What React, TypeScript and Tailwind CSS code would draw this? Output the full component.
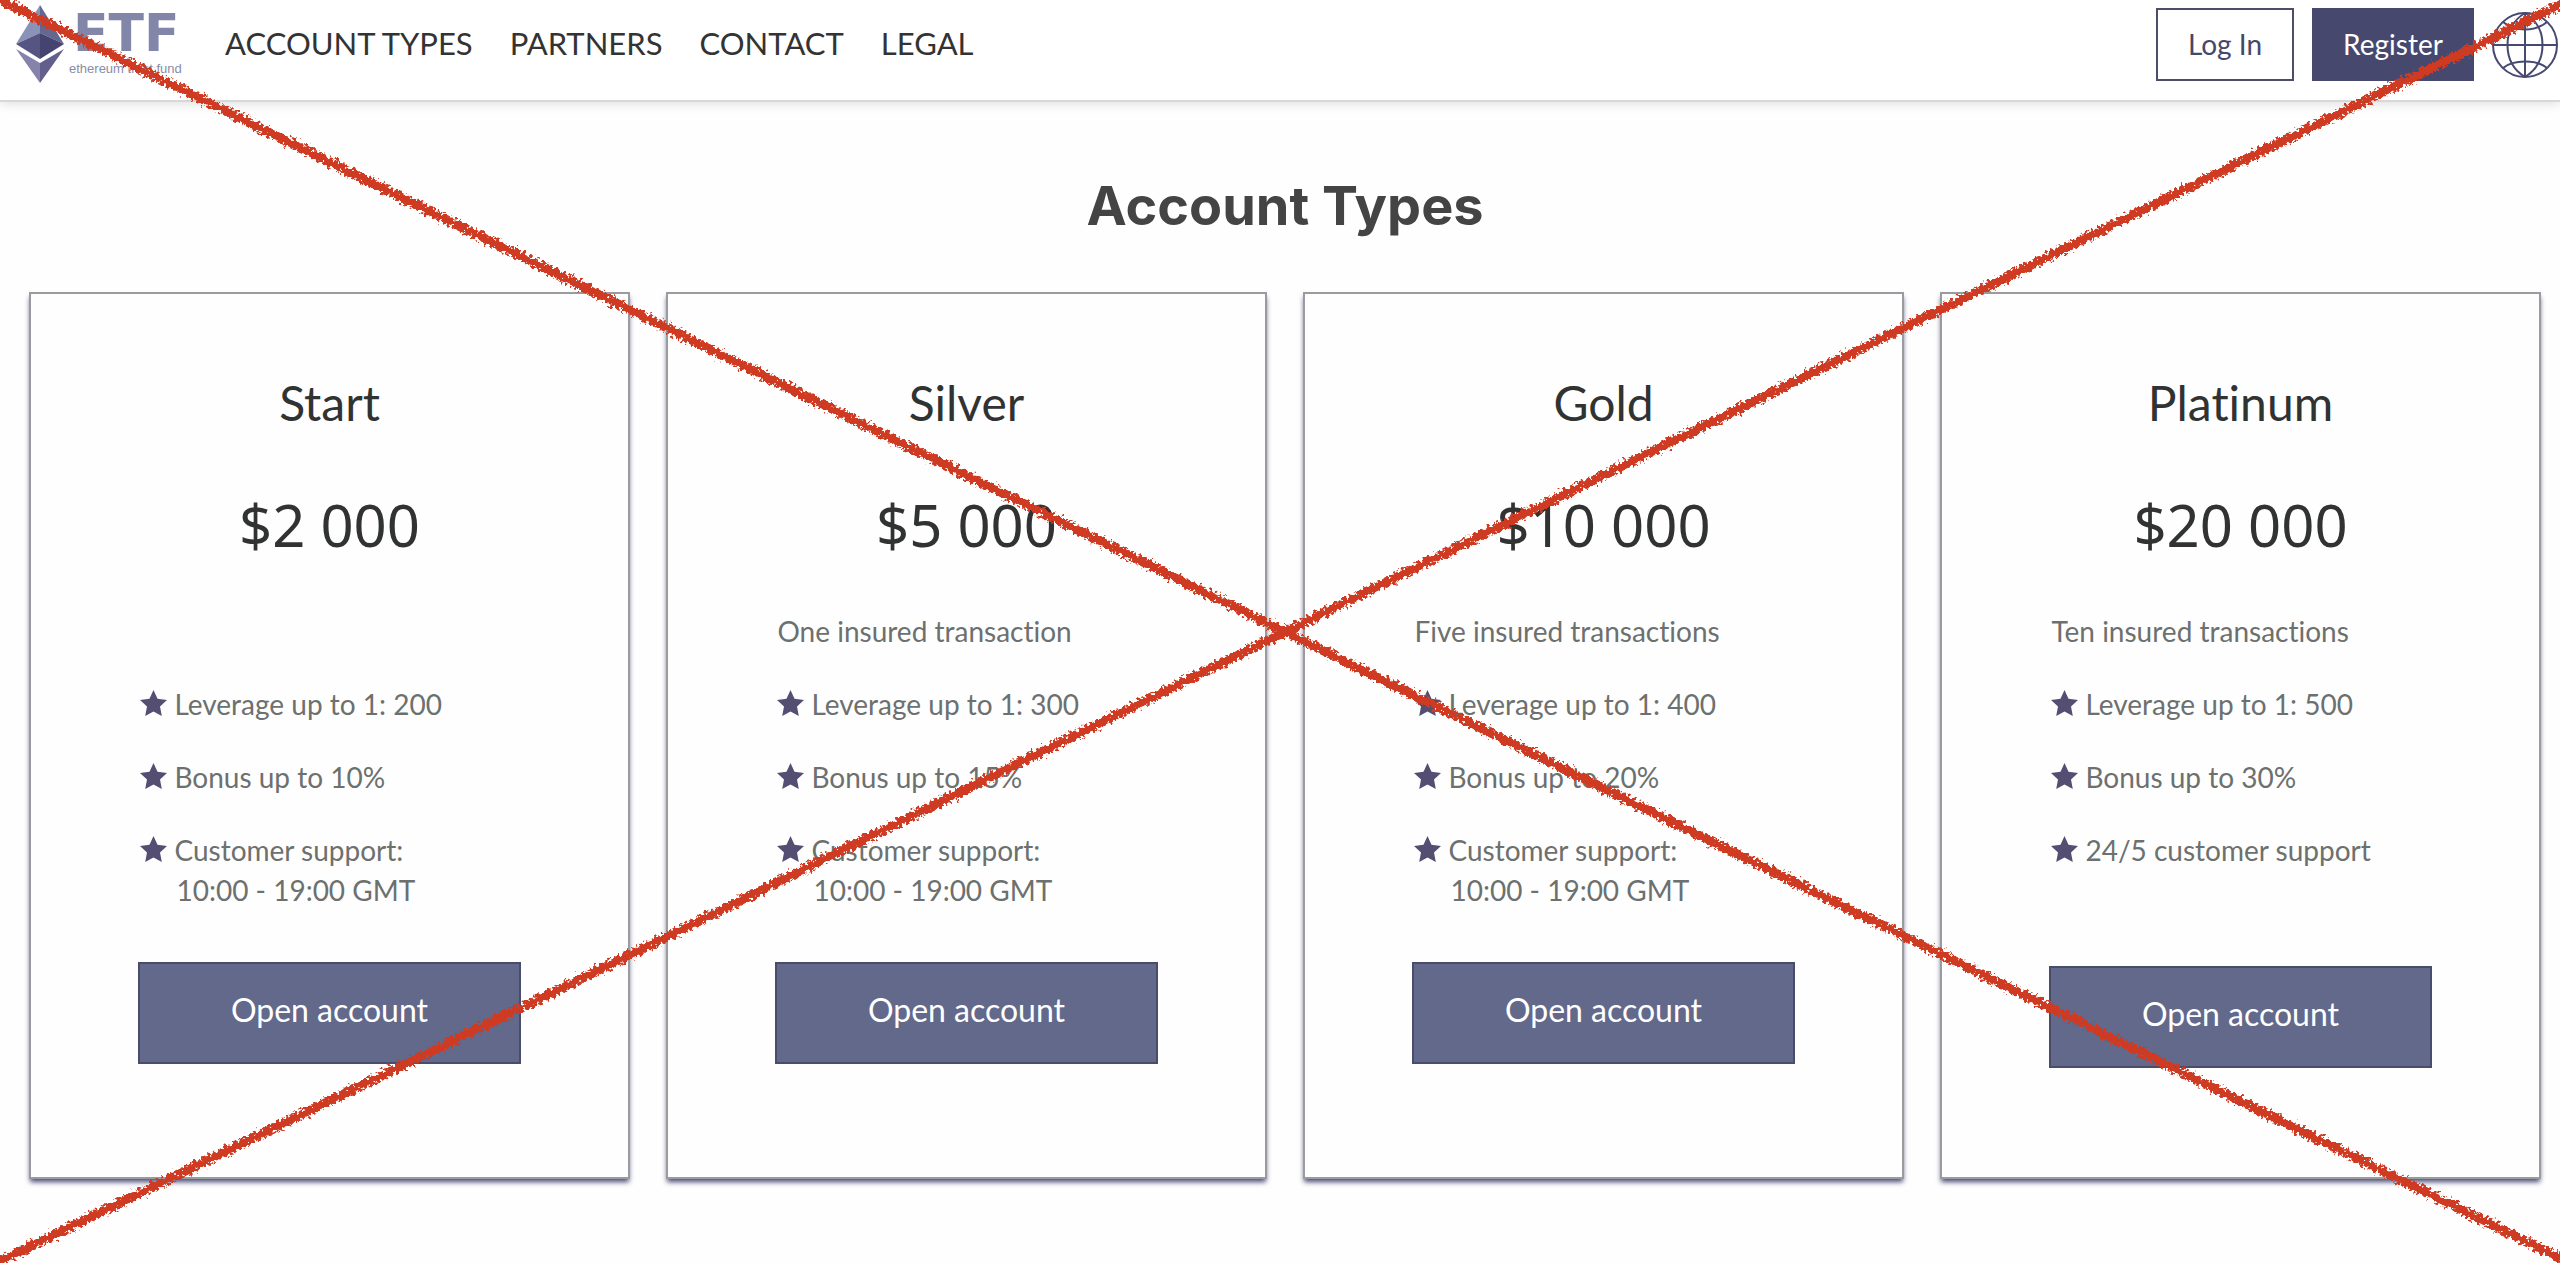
type Plan = {
  name: string;
  price: string;
  insured?: string;
  features: string[];
  hours?: string;
};

const plans: Plan[] = [
  {
    name: "Start",
    price: "$2 000",
    features: ["Leverage up to 1: 200", "Bonus up to 10%", "Customer support:"],
    hours: "10:00 - 19:00 GMT",
  },
  {
    name: "Silver",
    price: "$5 000",
    insured: "One insured transaction",
    features: ["Leverage up to 1: 300", "Bonus up to 15%", "Customer support:"],
    hours: "10:00 - 19:00 GMT",
  },
  {
    name: "Gold",
    price: "$10 000",
    insured: "Five insured transactions",
    features: ["Leverage up to 1: 400", "Bonus up to 20%", "Customer support:"],
    hours: "10:00 - 19:00 GMT",
  },
  {
    name: "Platinum",
    price: "$20 000",
    insured: "Ten insured transactions",
    features: ["Leverage up to 1: 500", "Bonus up to 30%", "24/5 customer support"],
  },
];

const navItems = ["ACCOUNT TYPES", "PARTNERS", "CONTACT", "LEGAL"];

function Diamond() {
  return (
    <svg viewBox="0 0 48 78" className="h-[78px] w-12 shrink-0" aria-hidden="true">
      <path d="M24 0 0 39l24-11z" fill="#8a92b8" />
      <path d="M24 0v28l24 11z" fill="#62688f" />
      <path d="M0 39l24-11v26z" fill="#555483" />
      <path d="M48 39 24 28v26z" fill="#45436f" />
      <path d="M0 44l24 14v20z" fill="#8583ab" />
      <path d="M48 44 24 58v20z" fill="#625f8c" />
    </svg>
  );
}

function Globe() {
  return (
    <svg
      viewBox="0 0 66 66"
      className="size-[66px]"
      fill="none"
      stroke="#464a70"
      strokeWidth="2"
      aria-hidden="true"
    >
      <circle cx="33" cy="33" r="32" />
      <path d="M33 1v64M1 33h64" />
      <path d="M33 1C20 9 15.500 21 15.500 33S20 57 33 65M33 1c13 8 17.500 20 17.500 32S46 57 33 65" />
      <path d="M11 10c6 5 14 7.500 22 7.500S49 15 55 10M11 56c6-5 14-6.500 22-6.500S49 51 55 56" />
    </svg>
  );
}

function Star() {
  return (
    <svg viewBox="0 0 30 28" className="mt-[5px] h-7 w-[30px] shrink-0" aria-hidden="true">
      <path
        d="M15.500 1l4 8.700 9.500 1.200-7 6.500 1.800 9.600-8.300-4.600L7.200 27 9 17.400l-7-6.500 9.500-1.200z"
        fill="#544f72"
      />
    </svg>
  );
}

function PlanCard({ plan }: { plan: Plan }) {
  return (
    <section className="flex flex-col items-center border-2 border-[#9a9b9e] bg-[#fefefe] pt-[77px] pb-[109px] shadow-[0_4px_5px_-1px_#4a4a78]">
      <h2 className="text-[48px] leading-[64px] text-[#303332]">{plan.name}</h2>
      <p className="mt-[50px] font-['Noto_Sans',sans-serif] text-[58px] leading-[80px] text-[#303332]">
        {plan.price}
      </p>
      <div className="mt-[46px] w-[64%] text-[28px] leading-10 text-[#6c706e]">
        <p className="min-h-10 whitespace-nowrap pl-0.5">{plan.insured}</p>
        <ul>
          {plan.features.map((feature) => (
            <li key={feature} className="mt-[33px] flex gap-1.5 whitespace-nowrap">
              <Star />
              {feature}
            </li>
          ))}
        </ul>
        {plan.hours ? <p className="pl-[38px]">{plan.hours}</p> : <div className="h-11" />}
        <button
          type="button"
          className="mt-[52px] h-[102px] w-full border-2 border-[#4a4c6c] bg-[#63698b] pb-1.5 text-[32px] text-white"
        >
          Open account
        </button>
      </div>
    </section>
  );
}

function CrossOut() {
  return (
    <svg
      viewBox="0 0 2560 1263"
      preserveAspectRatio="none"
      className="pointer-events-none absolute inset-0 h-full w-full"
      aria-hidden="true"
    >
      <defs>
        <filter id="crayon" filterUnits="userSpaceOnUse" x="-20" y="-20" width="2600" height="1303">
          <feTurbulence type="fractalNoise" baseFrequency="0.3" numOctaves="3" seed="4" result="noise" />
          <feDisplacementMap in="SourceGraphic" in2="noise" scale="11" xChannelSelector="R" yChannelSelector="G" />
        </filter>
      </defs>
      <g filter="url(#crayon)" stroke="#cf3b21" strokeWidth="9" fill="none">
        <path d="M-12 -6 1285 632 2572 1264" />
        <path d="M-12 1267 640 950 1285 632 2572 -1" />
      </g>
    </svg>
  );
}

export default function App() {
  return (
    <div className="relative min-h-screen overflow-hidden bg-[#fefefe] font-[Lato,sans-serif] [font-variant-ligatures:none]">
      <header className="flex h-[102px] items-start border-b-2 border-[#d8d8d8] bg-white pl-4 shadow-[0_2px_10px_rgba(0,0,0,0.12)]">
        <a href="#home" aria-label="ETF ethereum trust fund" className="flex pt-[5px]">
          <Diamond />
          <span className="ml-[5px] flex w-[116px] flex-col">
            <span className="pl-1 font-['DejaVu_Sans',sans-serif] text-[52px] leading-[56px] font-bold text-[#8286a9]">
              ETF
            </span>
            <span className="whitespace-nowrap font-['Liberation_Sans',sans-serif] text-[13px] leading-4 text-[#8a8ca6]">
              ethereum trust fund
            </span>
          </span>
        </a>
        <nav className="ml-10 flex gap-[37px] pt-[23px] text-[31px] leading-10 text-[#333]">
          {navItems.map((item) => (
            <a key={item} href="#nav" className="whitespace-nowrap">
              {item}
            </a>
          ))}
        </nav>
        <div className="ml-auto flex items-center gap-[18px] pt-2 pr-0.5 text-[28px]">
          <button type="button" className="h-[73px] w-[138px] border-2 border-[#4c4e68] pb-0.5 text-[#464868]">
            Log In
          </button>
          <button type="button" className="h-[73px] w-[162px] bg-[#46486d] pb-0.5 text-white">
            Register
          </button>
          <button type="button" aria-label="Language">
            <Globe />
          </button>
        </div>
      </header>
      <main className="pr-[19px] pl-[29px]">
        <h1 className="pt-[72px] text-center font-[Inter,sans-serif] text-[54px] leading-[64px] font-bold text-[#444]">
          Account Types
        </h1>
        <div className="mt-[54px] grid grid-cols-4 gap-9">
          {plans.map((plan) => (
            <PlanCard key={plan.name} plan={plan} />
          ))}
        </div>
      </main>
      <CrossOut />
    </div>
  );
}
